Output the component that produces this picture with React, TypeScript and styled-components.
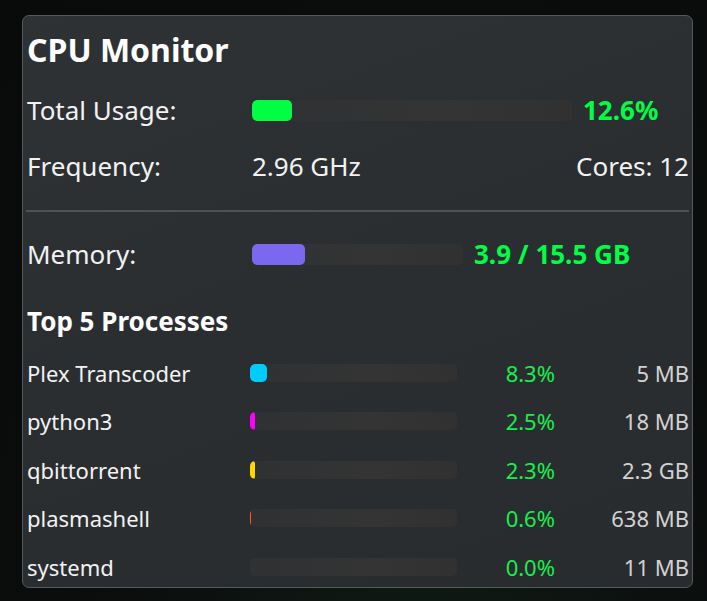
import React from "react";
import styled, { createGlobalStyle } from "styled-components";

const GlobalStyle = createGlobalStyle`
  html, body {
    margin: 0;
    padding: 0;
    background: #0b0d0d;
    height: 100%;
  }
  body {
    font-family: "Noto Sans", "DejaVu Sans", sans-serif;
    color: #f2f2f2;
  }
`;

const Desktop = styled.div`
  width: 707px;
  height: 601px;
  box-sizing: border-box;
  padding: 15px 0 0 22px;
  background: radial-gradient(ellipse at 60% 110%, #0f1a14 0%, #0b0d0d 55%, #090a0a 100%);
  overflow: hidden;
`;

const Panel = styled.section`
  width: 671px;
  height: 573px;
  box-sizing: border-box;
  border: 1.5px solid #56595c;
  border-radius: 7px;
  padding: 0 3px 0 4px;
  background: linear-gradient(160deg, #2f3235 0%, #2b2e31 45%, #292c2f 100%);
  overflow: hidden;
  display: flex;
  flex-direction: column;
`;

const Title = styled.h1`
  flex: none;
  margin: 0;
  height: 66px;
  display: flex;
  align-items: center;
  font-size: 32px;
  font-weight: 700;
  color: #ffffff;
`;

const StatRow = styled.div`
  height: 56px;
  flex: none;
  display: flex;
  align-items: center;
  font-size: 26px;
`;

const Label = styled.div<{ $width: number }>`
  width: ${(p) => p.$width}px;
  flex: none;
  white-space: nowrap;
`;

const Track = styled.div<{ $height: number }>`
  flex: 1;
  height: ${(p) => p.$height}px;
  border-radius: 5px;
  background: linear-gradient(90deg, #2f3133 0%, #343434 60%, #313131 100%);
  overflow: hidden;
`;

const Fill = styled.div<{ $color: string }>`
  height: 100%;
  border-radius: 5px;
  background: ${(p) => p.$color};
`;

const StatValue = styled.div<{ $width: number }>`
  width: ${(p) => p.$width}px;
  flex: none;
  margin-left: 11px;
  font-weight: 700;
  color: #00ff44;
  white-space: nowrap;
`;

const PlainValue = styled.div`
  flex: 1;
  white-space: nowrap;
`;

const RightValue = styled.div`
  white-space: nowrap;
  text-align: right;
`;

const Divider = styled.hr`
  flex: none;
  margin: 16px 0 14px -1px;
  border: none;
  height: 2px;
  background: #4f5255;
`;

const Heading = styled.h2`
  flex: none;
  margin: 14.5px 0 3.75px;
  height: 48px;
  display: flex;
  align-items: center;
  font-size: 26px;
  font-weight: 700;
  color: #ffffff;
`;

const ProcRow = styled.div`
  height: 48.5px;
  flex: none;
  display: flex;
  align-items: center;
  font-size: 22px;
`;

const ProcPct = styled.div`
  width: 98px;
  flex: none;
  text-align: right;
  color: #1aee4c;
`;

const ProcMem = styled.div`
  width: 134px;
  flex: none;
  text-align: right;
  color: #d2d2d2;
`;

type Proc = { name: string; cpu: number; mem: string; color: string };

const processes: Proc[] = [
  { name: "Plex Transcoder", cpu: 8.3, mem: "5 MB", color: "#00ccff" },
  { name: "python3", cpu: 2.5, mem: "18 MB", color: "#ff00ff" },
  { name: "qbittorrent", cpu: 2.3, mem: "2.3 GB", color: "#ffd700" },
  { name: "plasmashell", cpu: 0.6, mem: "638 MB", color: "#ff5722" },
  { name: "systemd", cpu: 0.0, mem: "11 MB", color: "#8bc34a" },
];

const totalUsage = 12.6;
const memUsed = 3.9;
const memTotal = 15.5;

export default function App() {
  return (
    <>
      <GlobalStyle />
      <Desktop>
        <Panel>
          <Title>CPU Monitor</Title>

          <StatRow>
            <Label $width={225}>Total Usage:</Label>
            <Track $height={21}>
              <Fill $color="#00ff44" style={{ width: `${totalUsage}%` }} />
            </Track>
            <StatValue $width={106}>{totalUsage.toFixed(1)}%</StatValue>
          </StatRow>

          <StatRow>
            <Label $width={225}>Frequency:</Label>
            <PlainValue>2.96 GHz</PlainValue>
            <RightValue>Cores: 12</RightValue>
          </StatRow>

          <Divider />

          <StatRow>
            <Label $width={225}>Memory:</Label>
            <Track $height={21}>
              <Fill
                $color="#7b68ee"
                style={{ width: `${(memUsed / memTotal) * 100}%` }}
              />
            </Track>
            <StatValue $width={215}>
              {memUsed.toFixed(1)} / {memTotal.toFixed(1)} GB
            </StatValue>
          </StatRow>

          <Heading>Top 5 Processes</Heading>

          {processes.map((p) => (
            <ProcRow key={p.name}>
              <Label $width={223}>{p.name}</Label>
              <Track $height={18}>
                <Fill
                  $color={p.color}
                  style={{ width: `${p.cpu}%`, borderRadius: p.cpu < 1 ? 0 : 5 }}
                />
              </Track>
              <ProcPct>{p.cpu.toFixed(1)}%</ProcPct>
              <ProcMem>{p.mem}</ProcMem>
            </ProcRow>
          ))}
        </Panel>
      </Desktop>
    </>
  );
}
